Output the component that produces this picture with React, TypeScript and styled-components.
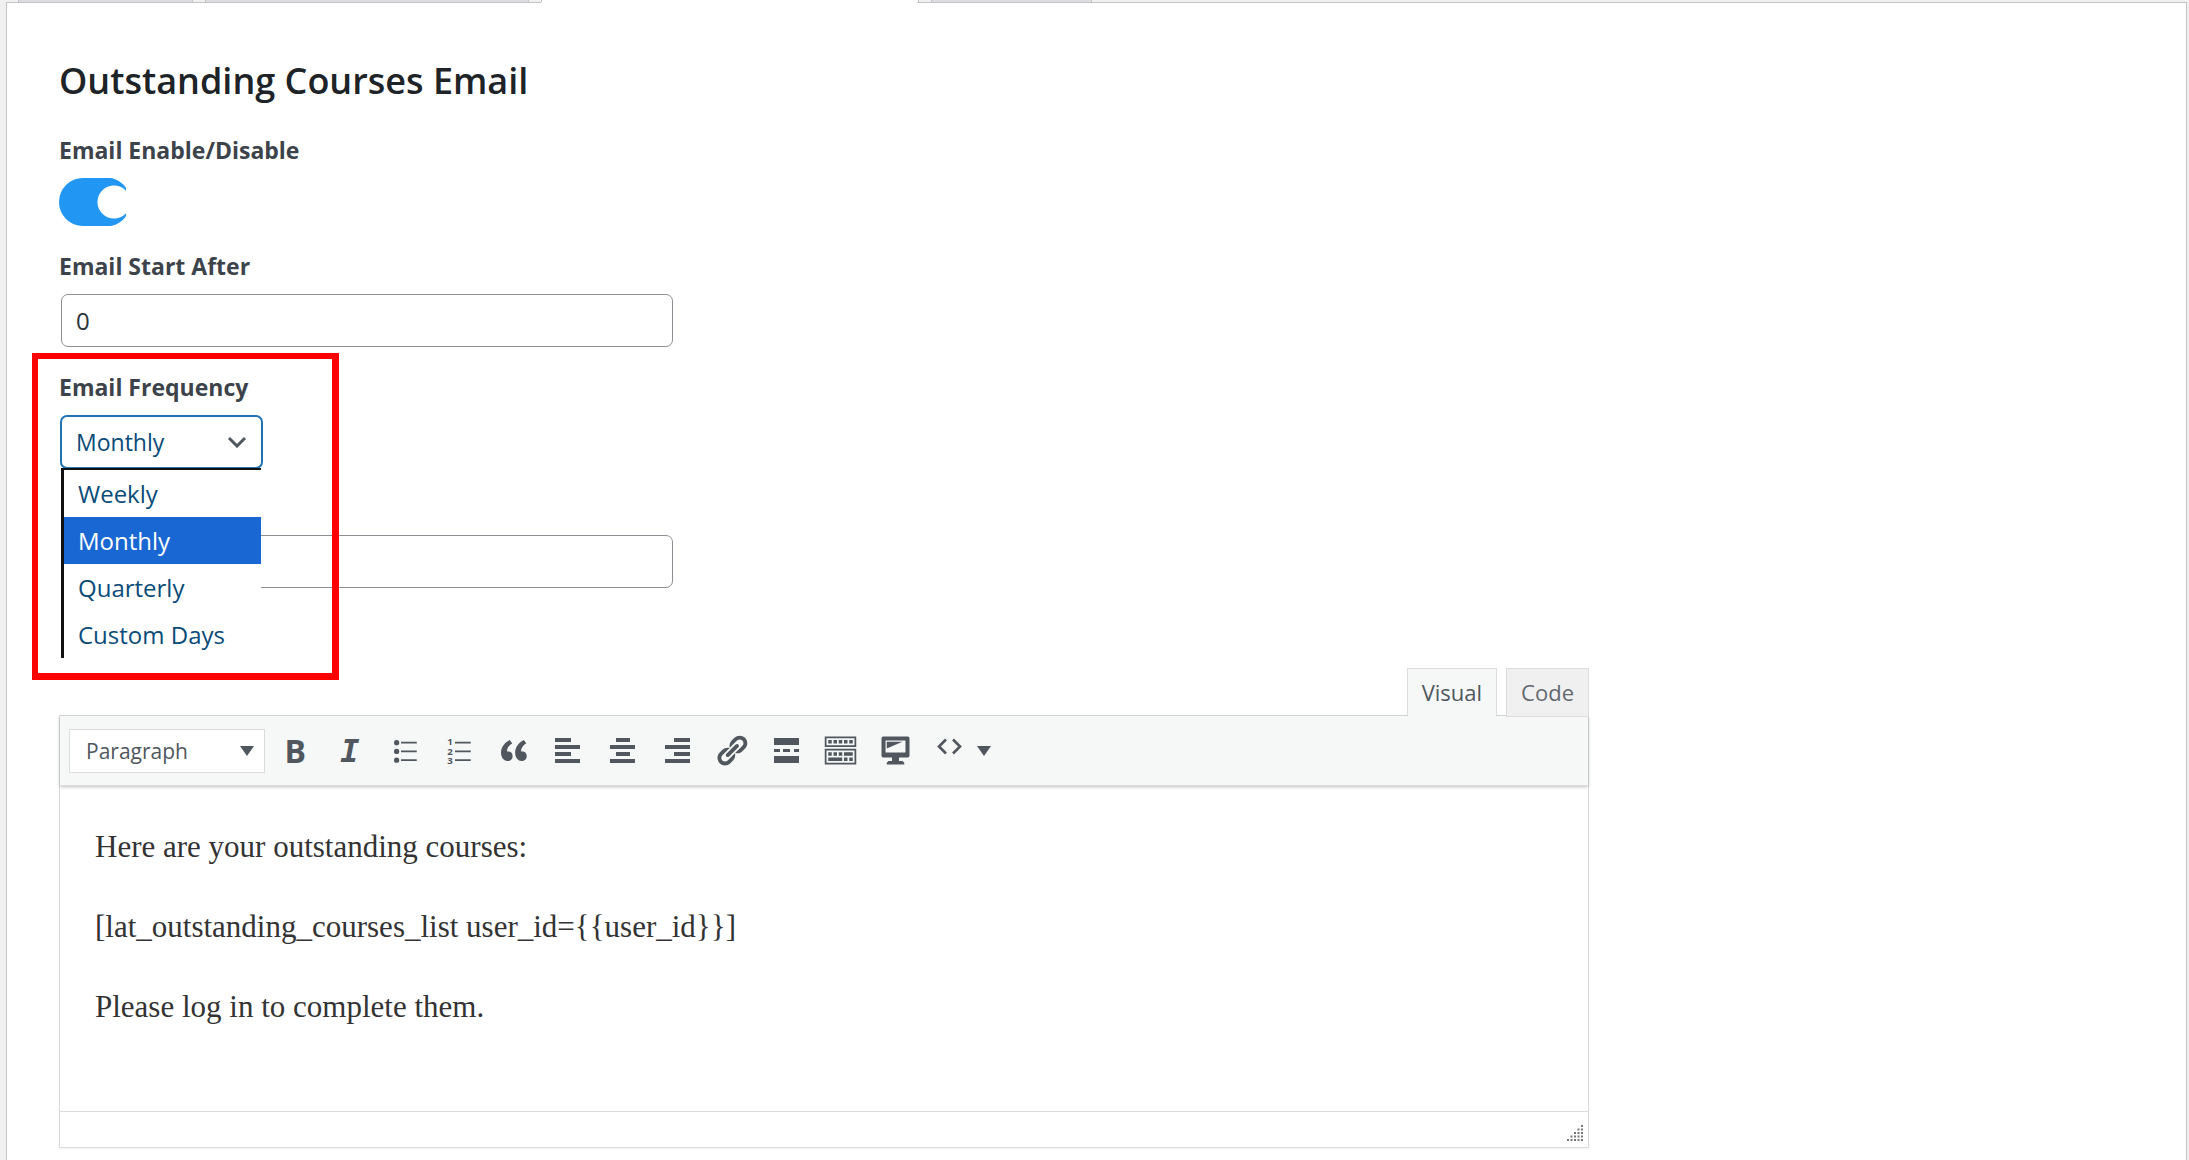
import React, { useState } from 'react';
import styled, { createGlobalStyle } from 'styled-components';

const ui = '"Open Sans", "Noto Sans", sans-serif';

const Global = createGlobalStyle`
  *, *::before, *::after { box-sizing: border-box; }
  body { margin: 0; background: #f0f0f1; color: #3c434a; font-family: ${ui}; }
  h2, p { margin: 0; }
  button, input, select { font-family: inherit; margin: 0; }
`;

const Page = styled.div`
  min-height: 100vh;
  display: flex;
  flex-direction: column;
  padding: 0 2px 0 6px;
`;

const TabStrip = styled.nav`
  display: flex;
  height: 2px;
  overflow: hidden;
  gap: 12px;
  padding-left: 12px;
`;

const PageTab = styled.button<{ $width: number; $active?: boolean }>`
  width: ${p => p.$width}px;
  flex: none;
  height: 40px;
  padding: 0;
  border: 1px solid #c3c4c7;
  border-width: 0 1px;
  background: ${p => (p.$active ? '#fff' : '#dcdcde')};
`;

const Panel = styled.main`
  flex: 1;
  display: flex;
  flex-direction: column;
  align-items: flex-start;
  padding: 48px 52px 12px;
  background: #fff;
  border: 1px solid #c3c4c7;
  border-bottom: 0;
`;

const ActiveSeam = styled.span`
  height: 1px;
  width: 376px;
  margin: -49px 0 48px 482px;
  background: #fff;
`;

const Title = styled.h2`
  font-size: 36px;
  line-height: 60px;
  font-weight: 600;
  color: #1d2327;
`;

const Label = styled.label`
  display: block;
  font-size: 23px;
  line-height: 36px;
  font-weight: 700;
`;

const Field = styled.div<{ $gap: number }>`
  margin-top: ${p => p.$gap}px;
`;

const Switch = styled.input`
  appearance: none;
  display: block;
  width: 67px;
  height: 48px;
  margin: 10px 0 0;
  border-radius: 24px 0 0 24px;
  background:
    radial-gradient(circle 17px at 55px 24px, #fff 16px, transparent 17px),
    radial-gradient(circle 25px at 47px 24px, #2196f3 24px, transparent 25px),
    linear-gradient(#2196f3, #2196f3) 0 0 / 47px 48px no-repeat;
`;

const TextBox = styled.input`
  display: block;
  width: 612px;
  height: 53px;
  margin: 10px 0 0 2px;
  padding: 0 14px;
  border: 1px solid #8c8f94;
  border-radius: 7px;
  background: #fff;
  color: #2c3338;
  font-size: 24px;
`;

const Frequency = styled.div`
  position: relative;
  margin-top: 22px;
`;

const Highlight = styled.div`
  position: absolute;
  inset: -16px auto auto -27px;
  width: 307px;
  height: 327px;
  border: solid #f00;
  border-width: 6px 7px 7px 6px;
  pointer-events: none;
`;

const SelectWrap = styled.div<{ $top: number }>`
  display: flex;
  align-items: center;
  width: max-content;
  margin-top: ${p => p.$top}px;
`;

const FrequencySelect = styled.select`
  appearance: none;
  width: 203px;
  height: 54px;
  margin-left: 1px;
  padding: 0 14px;
  border: 2px solid #2271b1;
  border-radius: 7px;
  background: #fff;
  color: #0a4b78;
  font-size: 23px;
`;

const SelectIcon = styled.span<{ $inset: number }>`
  display: flex;
  margin-left: -${p => p.$inset}px;
  pointer-events: none;
`;

const Options = styled.div`
  position: absolute;
  z-index: 2;
  top: 99px;
  left: 2px;
  width: 200px;
  border: solid #111;
  border-width: 2px 0 0 3px;
  background: #fff;
`;

const Option = styled.div<{ $selected: boolean }>`
  padding-left: 14px;
  font-size: 24px;
  line-height: 47px;
  color: ${p => (p.$selected ? '#fff' : '#0a4b78')};
  background: ${p => (p.$selected ? '#1967d2' : '#fff')};
`;

const Editor = styled.section`
  width: 1530px;
  max-width: 100%;
  margin-top: 80px;
`;

const EditorTabs = styled.div`
  position: relative;
  z-index: 1;
  display: flex;
  justify-content: flex-end;
  gap: 9px;
  margin-bottom: -2px;
`;

const EditorTab = styled.button<{ $active: boolean }>`
  height: 49px;
  padding: 0 14px 2px;
  border: 1px solid #dcdcde;
  border-bottom-color: ${p => (p.$active ? '#f6f7f7' : '#dcdcde')};
  background: ${p => (p.$active ? '#f6f7f7' : '#f0f0f1')};
  color: ${p => (p.$active ? '#50575e' : '#646970')};
  font-size: 22px;
`;

const Frame = styled.div`
  border: 1px solid #dcdcde;
  box-shadow: 0 1px 2px rgba(0, 0, 0, 0.06);
`;

const Toolbar = styled.div`
  display: flex;
  align-items: center;
  height: 70px;
  padding-left: 9px;
  background: #f6f7f7;
  border-bottom: 1px solid #dcdcde;
  box-shadow: 0 1px 3px rgba(0, 0, 0, 0.25);
  color: #50575e;
`;

const BlockSelect = styled.select`
  appearance: none;
  width: 196px;
  height: 44px;
  padding: 0 16px;
  border: 1px solid #dcdcde;
  border-radius: 0;
  background: #fff;
  color: #50575e;
  font-size: 21px;
`;

const Tools = styled.div`
  display: grid;
  grid-template-columns: repeat(13, 1fr);
  width: 709px;
  margin-left: 14px;
`;

const Tool = styled.button`
  display: flex;
  align-items: center;
  justify-content: center;
  height: 44px;
  padding: 0;
  border: 0;
  background: none;
  color: inherit;
`;

const Bold = styled.b`
  font: 700 32px/36px ${ui};
`;

const Italic = styled.i`
  font: italic 700 32px/36px "DejaVu Sans Mono", monospace;
`;

const Body = styled.div`
  display: flex;
  flex-direction: column;
  gap: 40px;
  min-height: 325px;
  padding: 41px 35px 40px;
  font-family: Georgia, "Liberation Serif", serif;
  font-size: 31px;
  line-height: 40px;
  color: #333;
`;

const StatusBar = styled.div`
  display: flex;
  justify-content: flex-end;
  align-items: flex-end;
  height: 36px;
  padding: 5px;
  border-top: 1px solid #dcdcde;
`;

const Icon = ({ d, crisp, children }: { d?: string; crisp?: boolean; children?: React.ReactNode }) => (
  <svg
    width="35"
    height="35"
    viewBox="0 0 20 20"
    fill="currentColor"
    shapeRendering={crisp ? 'crispEdges' : 'auto'}
    aria-hidden="true"
  >
    {d && <path d={d} fillRule="evenodd" />}
    {children}
  </svg>
);

const Triangle = () => (
  <svg width="14" height="10" viewBox="0 0 14 10" fill="#50575e" aria-hidden="true">
    <path d="M0 0h14L7 10z" />
  </svg>
);

const tools: { name: string; icon: React.ReactNode }[] = [
  { name: 'Bold', icon: <Bold>B</Bold> },
  { name: 'Italic', icon: <Italic>I</Italic> },
  {
    name: 'Bulleted list',
    icon: <Icon d="M5.5 7a1.5 1.5 0 1 1 0-3 1.5 1.5 0 0 1 0 3zM8 5h9v1H8zM5.5 12a1.5 1.5 0 1 1 0-3 1.5 1.5 0 0 1 0 3zM8 10h9v1H8zM5.5 17a1.5 1.5 0 1 1 0-3 1.5 1.5 0 0 1 0 3zM8 15h9v1H8z" />,
  },
  {
    name: 'Numbered list',
    icon: (
      <Icon d="M8 5h9v1H8zM8 10h9v1H8zM8 15h9v1H8z">
        <g fontSize="5.5" fontWeight="700" fontFamily="Open Sans, sans-serif">
          <text x="3.6" y="7">1</text>
          <text x="3.6" y="12.3">2</text>
          <text x="3.6" y="17.6">3</text>
        </g>
      </Icon>
    ),
  },
  {
    name: 'Blockquote',
    icon: <Icon d="M9.49 13.22c0-.74-.2-1.38-.61-1.9-.62-.78-1.83-.88-2.53-.72-.29-1.65 1.11-3.75 2.92-4.65L7.88 4c-2.73 1.3-5.42 4.28-4.96 8.05C3.21 14.43 4.59 16 6.54 16c.85 0 1.56-.25 2.12-.75s.83-1.18.83-2.03zm8.05 0c0-.74-.2-1.38-.61-1.9-.63-.78-1.83-.88-2.53-.72-.29-1.65 1.11-3.75 2.92-4.65L15.93 4c-2.73 1.3-5.41 4.28-4.95 8.05.29 2.38 1.66 3.95 3.61 3.95.85 0 1.56-.25 2.12-.75s.83-1.18.83-2.03z" />,
  },
  { name: 'Align left', icon: <Icon crisp d="M3 3h9v2H3zM3 7h14v2H3zM3 11h9v2H3zM3 15h14v2H3z" /> },
  { name: 'Align center', icon: <Icon crisp d="M6 3h8v2H6zM3 7h14v2H3zM6 11h8v2H6zM3 15h14v2H3z" /> },
  { name: 'Align right', icon: <Icon crisp d="M8 3h9v2H8zM3 7h14v2H3zM8 11h9v2H8zM3 15h14v2H3z" /> },
  {
    name: 'Insert link',
    icon: <Icon d="M17.74 2.76c1.68 1.69 1.68 4.41 0 6.1l-1.53 1.52c-1.12 1.12-2.7 1.47-4.14 1.09l2.62-2.61.76-.77.76-.76c.84-.84.84-2.2 0-3.04-.84-.85-2.2-.85-3.04 0l-.77.76-3.38 3.38c-.37-1.44-.02-3.02 1.1-4.14l1.52-1.53c1.69-1.68 4.42-1.68 6.1 0zM8.59 13.43l5.34-5.34c.42-.42.42-1.1 0-1.52-.44-.43-1.13-.39-1.53 0l-5.33 5.34c-.42.42-.42 1.1 0 1.52.44.43 1.13.39 1.52 0zm-.76 2.29l4.14-4.15c.38 1.44.03 3.02-1.09 4.14l-1.52 1.53c-1.69 1.68-4.41 1.68-6.1 0-1.68-1.68-1.68-4.42 0-6.1l1.53-1.52c1.12-1.12 2.7-1.47 4.14-1.1l-4.14 4.15c-.85.84-.85 2.2 0 3.05.84.84 2.2.84 3.04 0z" />,
  },
  { name: 'Read more', icon: <Icon crisp d="M17 7V3H3v4h14zM6 11V9H3v2h3zm6 0V9H8v2h4zm5 0V9h-3v2h3zm0 6v-4H3v4h14z" /> },
  {
    name: 'Toolbar toggle',
    icon: <Icon d="M19 2v6H1V2h18zm-1 5V3H2v4h16zM5 4v2H3V4h2zm3 0v2H6V4h2zm3 0v2H9V4h2zm3 0v2h-2V4h2zm3 0v2h-2V4h2zm2 5v9H1V9h18zm-1 8v-7H2v7h16zM5 11v2H3v-2h2zm3 0v2H6v-2h2zm3 0v2H9v-2h2zm6 0v2h-5v-2h5zm-6 3v2H3v-2h8zm3 0v2h-2v-2h2zm3 0v2h-2v-2h2z" />,
  },
  {
    name: 'Preview',
    icon: <Icon d="M3 2h14a1 1 0 0 1 1 1v10a1 1 0 0 1-1 1h-5v2h2l1 1v1H5v-1l1-1h2v-2H3a1 1 0 0 1-1-1V3a1 1 0 0 1 1-1zM4.300 4.300v6.900h11.400V4.300zM5 5h9L5 8.800z" />,
  },
  {
    name: 'Shortcodes',
    icon: (
      <Icon>
        <path d="M8 3.700 4 7.700l4 4M12 3.700l4 4-4 4" fill="none" stroke="currentColor" strokeWidth="1.500" />
      </Icon>
    ),
  },
];

const frequencies = ['Weekly', 'Monthly', 'Quarterly', 'Custom Days'];
const gripRows = [1, 2, 3, 4, 5];

export default function App() {
  const [frequency, setFrequency] = useState('Monthly');
  return (
    <>
      <Global />
      <Page>
        <TabStrip aria-label="Settings sections">
          <PageTab $width={175} aria-label="General" />
          <PageTab $width={324} aria-label="Courses" />
          <PageTab $width={378} $active aria-label="Outstanding courses" />
          <PageTab $width={161} aria-label="More" />
        </TabStrip>
        <Panel>
          <ActiveSeam />
          <Title>Outstanding Courses Email</Title>
          <Field $gap={21}>
            <Label htmlFor="enable">Email Enable/Disable</Label>
            <Switch id="enable" type="checkbox" defaultChecked />
          </Field>
          <Field $gap={22}>
            <Label htmlFor="start">Email Start After</Label>
            <TextBox id="start" type="text" defaultValue="0" />
          </Field>
          <Frequency>
            <Highlight />
            <Label htmlFor="frequency">Email Frequency</Label>
            <SelectWrap $top={10}>
              <FrequencySelect id="frequency" value={frequency} onChange={e => setFrequency(e.target.value)}>
                {frequencies.map(f => <option key={f}>{f}</option>)}
              </FrequencySelect>
              <SelectIcon $inset={36}>
                <svg width="20" height="12" viewBox="0 0 20 12" fill="none" stroke="#50575e" strokeWidth="3" aria-hidden="true">
                  <path d="M2 2l8 8 8-8" />
                </svg>
              </SelectIcon>
            </SelectWrap>
            <Options>
              {frequencies.map(f => (
                <Option key={f} $selected={f === frequency} onClick={() => setFrequency(f)}>{f}</Option>
              ))}
            </Options>
          </Frequency>
          <Field $gap={56}>
            <TextBox type="text" aria-label="Custom Days" />
          </Field>
          <Editor>
            <EditorTabs>
              <EditorTab $active>Visual</EditorTab>
              <EditorTab $active={false}>Code</EditorTab>
            </EditorTabs>
            <Frame>
              <Toolbar>
                <SelectWrap $top={0}>
                  <BlockSelect aria-label="Block format"><option>Paragraph</option></BlockSelect>
                  <SelectIcon $inset={25}><Triangle /></SelectIcon>
                </SelectWrap>
                <Tools>
                  {tools.map(t => <Tool key={t.name} aria-label={t.name}>{t.icon}</Tool>)}
                </Tools>
                <Triangle />
              </Toolbar>
              <Body>
                <p>Here are your outstanding courses:</p>
                <p>[lat_outstanding_courses_list user_id={'{{user_id}}'}]</p>
                <p>Please log in to complete them.</p>
              </Body>
              <StatusBar>
                <svg width="17" height="17" viewBox="0 0 17 17" fill="#777" aria-hidden="true">
                  {gripRows.map(r =>
                    Array.from({ length: r }, (_, i) => (
                      <rect key={`${r}-${i}`} x={15 - i * 3.5} y={(r - 1) * 3.5} width="2" height="2" />
                    ))
                  )}
                </svg>
              </StatusBar>
            </Frame>
          </Editor>
        </Panel>
      </Page>
    </>
  );
}
